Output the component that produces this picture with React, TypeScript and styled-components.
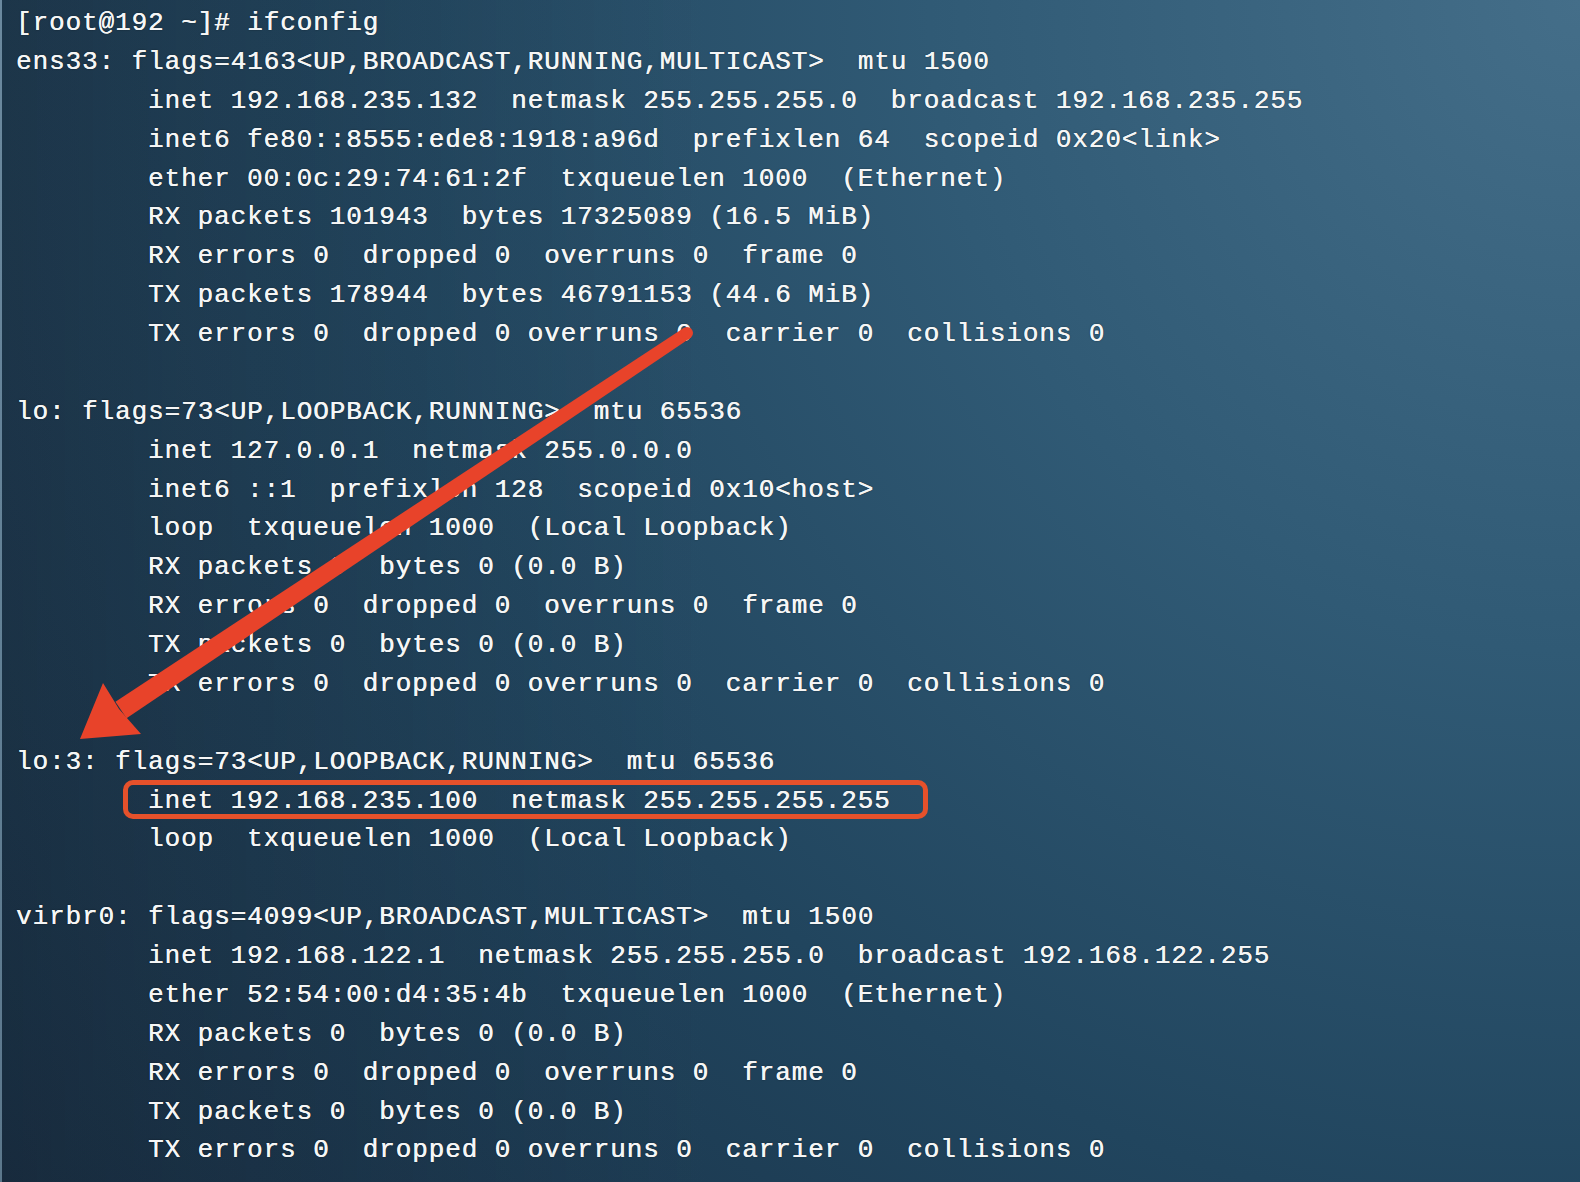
import React from "react";
import styled, { createGlobalStyle } from "styled-components";

const GlobalStyle = createGlobalStyle`
  html, body {
    margin: 0;
    padding: 0;
    background: #1b3347;
  }
  #root {
    min-height: 100vh;
  }
`;

const Screen = styled.main`
  position: relative;
  width: 1580px;
  height: 1182px;
  overflow: hidden;
  box-sizing: border-box;
  border-left: 2px solid rgba(140, 160, 176, 0.55);
  background:
    linear-gradient(90deg, rgba(30, 38, 46, 0.2) 0%, rgba(30, 38, 46, 0) 45%),
    radial-gradient(circle farthest-corner at 100% 0%, #446e89 0%, #305a75 33%, #21455e 62%, #162c41 100%);
`;

const Terminal = styled.pre`
  margin: 0;
  padding: 4px 0 0 14px;
  font-family: "Liberation Mono", "DejaVu Sans Mono", monospace;
  font-size: 26px;
  letter-spacing: 0.9px;
  line-height: 38.89px;
  color: #f5f6f6;
  text-shadow: 0.35px 0 0 #f5f6f6, 0 0 1.5px rgba(0, 0, 0, 0.6);
  white-space: pre;
`;

const Line = styled.div`
  height: 38.89px;
`;

const Detail = styled(Line)`
  padding-left: 132px;
`;

const Block = styled.section`
  display: flex;
  flex-direction: column;
  & + & {
    margin-top: 38.89px;
  }
`;

const Highlight = styled.span`
  position: relative;
  display: inline-block;
  height: 38.89px;
  &::before {
    content: "";
    position: absolute;
    top: -1.5px;
    bottom: 1px;
    left: -25px;
    right: -37px;
    border: 5px solid #e6512b;
    border-radius: 10px;
  }
`;

const ArrowLayer = styled.svg`
  position: absolute;
  left: -2px;
  top: 0;
  width: 1580px;
  height: 1182px;
  pointer-events: none;
`;

type Iface = {
  header: string;
  details: React.ReactNode[];
};

const interfaces: Iface[] = [
  {
    header: "ens33: flags=4163<UP,BROADCAST,RUNNING,MULTICAST>  mtu 1500",
    details: [
      "inet 192.168.235.132  netmask 255.255.255.0  broadcast 192.168.235.255",
      "inet6 fe80::8555:ede8:1918:a96d  prefixlen 64  scopeid 0x20<link>",
      "ether 00:0c:29:74:61:2f  txqueuelen 1000  (Ethernet)",
      "RX packets 101943  bytes 17325089 (16.5 MiB)",
      "RX errors 0  dropped 0  overruns 0  frame 0",
      "TX packets 178944  bytes 46791153 (44.6 MiB)",
      "TX errors 0  dropped 0 overruns 0  carrier 0  collisions 0",
    ],
  },
  {
    header: "lo: flags=73<UP,LOOPBACK,RUNNING>  mtu 65536",
    details: [
      "inet 127.0.0.1  netmask 255.0.0.0",
      "inet6 ::1  prefixlen 128  scopeid 0x10<host>",
      "loop  txqueuelen 1000  (Local Loopback)",
      "RX packets 0  bytes 0 (0.0 B)",
      "RX errors 0  dropped 0  overruns 0  frame 0",
      "TX packets 0  bytes 0 (0.0 B)",
      "TX errors 0  dropped 0 overruns 0  carrier 0  collisions 0",
    ],
  },
  {
    header: "lo:3: flags=73<UP,LOOPBACK,RUNNING>  mtu 65536",
    details: [
      <Highlight key="hl">inet 192.168.235.100  netmask 255.255.255.255</Highlight>,
      "loop  txqueuelen 1000  (Local Loopback)",
    ],
  },
  {
    header: "virbr0: flags=4099<UP,BROADCAST,MULTICAST>  mtu 1500",
    details: [
      "inet 192.168.122.1  netmask 255.255.255.0  broadcast 192.168.122.255",
      "ether 52:54:00:d4:35:4b  txqueuelen 1000  (Ethernet)",
      "RX packets 0  bytes 0 (0.0 B)",
      "RX errors 0  dropped 0  overruns 0  frame 0",
      "TX packets 0  bytes 0 (0.0 B)",
      "TX errors 0  dropped 0 overruns 0  carrier 0  collisions 0",
    ],
  },
];

function Arrow() {
  // tail (687,333) -> tip (80,739)
  const tail = { x: 687, y: 333 };
  const base = { x: 121, y: 710 };
  const n = { x: 0.556, y: 0.831 };
  const tw = 6;
  const hw = 10;
  const shaft = [
    [tail.x + n.x * tw, tail.y + n.y * tw],
    [base.x + n.x * hw, base.y + n.y * hw],
    [base.x - n.x * hw, base.y - n.y * hw],
    [tail.x - n.x * tw, tail.y - n.y * tw],
  ]
    .map((p) => p.join(","))
    .join(" ");
  return (
    <ArrowLayer viewBox="0 0 1580 1182">
      <polygon points={shaft} fill="#e8432a" />
      <circle cx={tail.x} cy={tail.y} r={tw} fill="#e8432a" />
      <polygon points="80,739 103,683 119,709 141,734" fill="#e8432a" />
    </ArrowLayer>
  );
}

export default function App() {
  return (
    <>
      <GlobalStyle />
      <Screen>
        <Terminal>
          <Block>
            <Line>[root@192 ~]# ifconfig</Line>
            {interfaces.slice(0, 1).map((iface) => (
              <React.Fragment key={iface.header}>
                <Line>{iface.header}</Line>
                {iface.details.map((d, i) => (
                  <Detail key={i}>{d}</Detail>
                ))}
              </React.Fragment>
            ))}
          </Block>
          {interfaces.slice(1).map((iface) => (
            <Block key={iface.header}>
              <Line>{iface.header}</Line>
              {iface.details.map((d, i) => (
                <Detail key={i}>{d}</Detail>
              ))}
            </Block>
          ))}
        </Terminal>
        <Arrow />
      </Screen>
    </>
  );
}
